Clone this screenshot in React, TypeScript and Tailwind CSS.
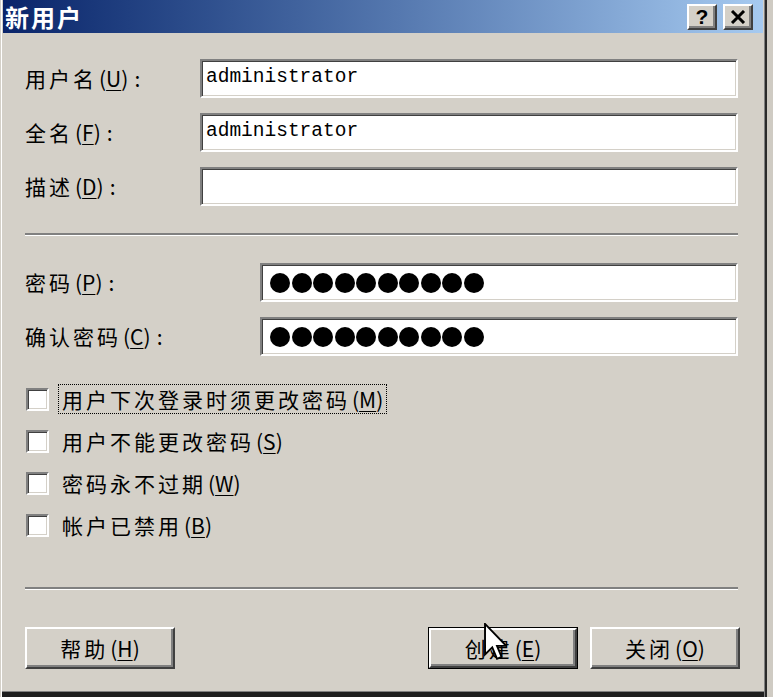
import React from "react";

const sunken =
  "bg-white border-2 border-t-[#808080] border-l-[#808080] border-b-white border-r-white shadow-[inset_1px_1px_0_#404040,inset_-1px_-1px_0_#d4d0c8]";
const raised =
  "bg-[#d4d0c8] border-2 border-t-white border-l-white border-b-[#404040] border-r-[#404040] shadow-[inset_-2px_-2px_0_#808080]";

const Key = ({ k }: { k: string }) => (
  <span className="tracking-normal ml-[2px]">
    (<span className="underline underline-offset-[3px] decoration-1">{k}</span>)
  </span>
);

const Field = ({
  label,
  k,
  labelW,
  value,
  password,
}: {
  label: string;
  k: string;
  labelW: string;
  value?: string;
  password?: boolean;
}) => (
  <div className="flex items-center h-[39px]">
    <div className={`${labelW} shrink-0 text-[21px] tracking-[3px] leading-none`}>
      {label}
      <Key k={k} />
      <span className="ml-[6px]">:</span>
    </div>
    <div className={`${sunken} flex-1 h-[39px] flex items-center pl-[4px]`}>
      {password ? (
        <div className="flex gap-[1.5px] pl-[4px]">
          {Array.from({ length: 10 }).map((_, i) => (
            <span key={i} className="w-[20px] h-[20px] rounded-full bg-black" />
          ))}
        </div>
      ) : (
        <span className="font-['Liberation_Mono',monospace] text-[19.5px] leading-none -mt-[1px]">
          {value}
        </span>
      )}
    </div>
  </div>
);

const Check = ({ label, k, focus }: { label: string; k: string; focus?: boolean }) => (
  <div className="flex items-center h-[30px]">
    <span className={`${sunken} w-[23px] h-[23px] ml-[1px] shrink-0`} />
    <span
      className={`ml-[9px] px-[3px] h-[30px] flex items-center text-[21px] tracking-[3px] leading-none border border-dotted ${
        focus ? "border-black" : "border-transparent"
      }`}
    >
      {label}
      <Key k={k} />
    </span>
  </div>
);

const Separator = () => (
  <div className="h-[3px] border-t-2 border-t-[#808080] border-b border-b-white" />
);

const Button = ({
  label,
  k,
  isDefault,
  children,
}: {
  label: string;
  k: string;
  isDefault?: boolean;
  children?: React.ReactNode;
}) => (
  <div
    className={`relative w-[150px] h-[42px] ${
      isDefault ? "border border-black" : ""
    }`}
  >
    <div
      className={`${raised} w-full h-full flex items-center justify-center text-[21px] tracking-[3px] leading-none`}
    >
      {label}
      <Key k={k} />
    </div>
    {children}
  </div>
);

export default function App() {
  return (
    <div className="w-[773px] h-[697px] bg-[#cfcbc3] flex overflow-hidden font-['Noto_Sans_CJK_SC','Noto_Sans',sans-serif] text-black">
      <div className="w-[767px] h-[697px] flex flex-col bg-[#d4d0c8] pl-[3px] pr-[4px] pb-[5px] shadow-[inset_1px_0_0_#d4d0c8,inset_2px_0_0_#ffffff,inset_-2px_0_0_#2a2a2a,inset_-3px_0_0_#808080,inset_0_-5px_0_#1e1e1e,inset_0_-6px_0_#808080]">
        {/* title bar */}
        <div className="h-[33px] shrink-0 flex items-center justify-between bg-linear-to-r from-[#0a246a] to-[#a6caf0] pl-[2px] pr-[10px]">
          <span className="text-white font-bold text-[24px] tracking-[2px] leading-[33px]">新用户</span>
          <div className="flex gap-[6px]">
            <div className={`${raised} w-[30px] h-[26px] flex items-center justify-center font-['Liberation_Sans',sans-serif] font-bold text-[21px] leading-none`}>
              ?
            </div>
            <div className={`${raised} w-[30px] h-[26px] flex items-center justify-center`}>
              <svg width="16" height="14" viewBox="0 0 16 14">
                <path d="M2 1 L14 13 M14 1 L2 13" stroke="black" strokeWidth="3" />
              </svg>
            </div>
          </div>
        </div>

        {/* body */}
        <div className="flex-1 flex flex-col pl-[22px] pr-[25px]">
          <div className="mt-[26px] flex flex-col gap-[15px]">
            <Field label="用户名" k="U" labelW="w-[175px]" value="administrator" />
            <Field label="全名" k="F" labelW="w-[175px]" value="administrator" />
            <Field label="描述" k="D" labelW="w-[175px]" value="" />
          </div>

          <div className="mt-[27px]">
            <Separator />
          </div>

          <div className="mt-[27px] flex flex-col gap-[15px]">
            <Field label="密码" k="P" labelW="w-[235px]" password />
            <Field label="确认密码" k="C" labelW="w-[235px]" password />
          </div>

          <div className="mt-[28px] flex flex-col gap-[12px]">
            <Check label="用户下次登录时须更改密码" k="M" focus />
            <Check label="用户不能更改密码" k="S" />
            <Check label="密码永不过期" k="W" />
            <Check label="帐户已禁用" k="B" />
          </div>

          <div className="mt-[47px]">
            <Separator />
          </div>

          <div className="mt-[37px] flex justify-between items-center">
            <Button label="帮助" k="H" />
            <div className="flex gap-[12px] -mr-[2px]">
              <Button label="创建" k="E" isDefault>
                <svg
                  className="absolute left-[55px] top-[-5px]"
                  width="23"
                  height="40"
                  viewBox="0 0 12 21"
                >
                  <path
                    d="M0.5 0.5 L0.5 16.5 L4.3 12.8 L6.8 18.8 L9.2 17.8 L6.8 12 L11.6 12 Z"
                    fill="white"
                    stroke="black"
                    strokeWidth="1"
                    strokeLinejoin="miter"
                  />
                </svg>
              </Button>
              <Button label="关闭" k="O" />
            </div>
          </div>
        </div>
      </div>
    </div>
  );
}
